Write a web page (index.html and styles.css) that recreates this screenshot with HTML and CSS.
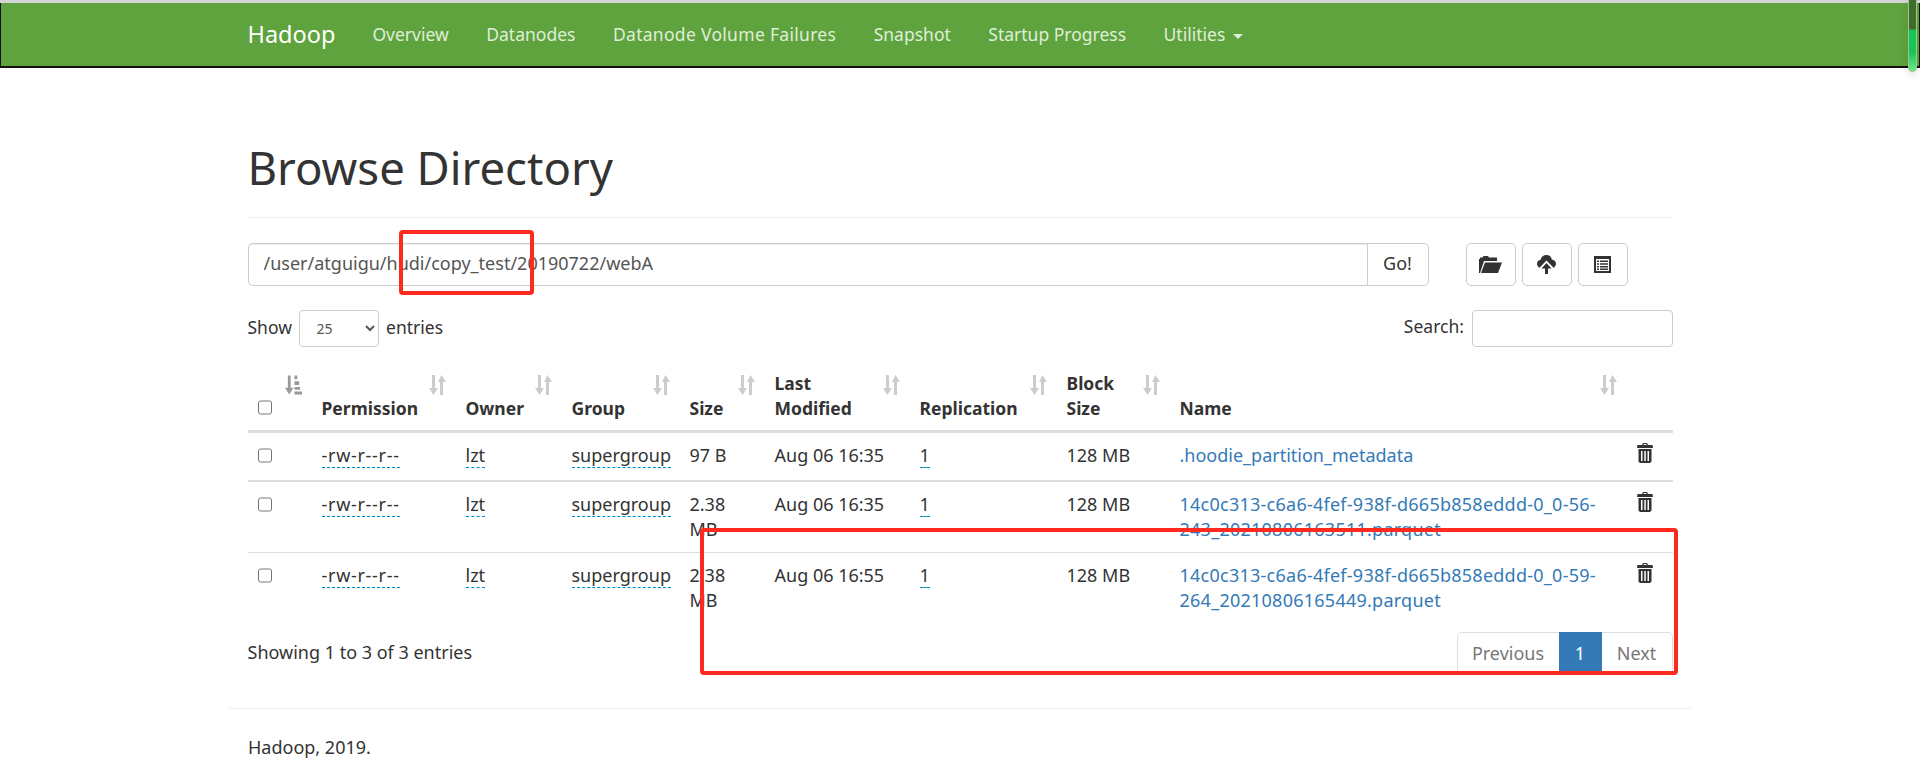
FILE: index.html
```html
<!DOCTYPE html>
<html lang="en">
  <head>
    <meta charset="UTF-8" />
    <meta name="viewport" content="width=device-width, initial-scale=1.0" />
    <title>Browsing HDFS</title>
    <link rel="stylesheet" href="styles.css">
  </head>
  <body>
    <svg class="defs" width="0" height="0">
      <symbol id="i-sort" viewBox="0 0 17 20">
        <path d="M3 0h3v13h3l-4.500 7L0 13h3zM11 7h3v13h-3zM12.500 0L17 7h-8z"/>
      </symbol>
      <symbol id="i-sort-active" viewBox="0 0 18 20">
        <path d="M3 0h3v13h3l-4.500 7L0 13h3z"/>
        <path d="M10 0h3v4h-3zM10 6h5v4h-5zM10 12h6v3h-6zM10 17h8v3h-8z"/>
      </symbol>
      <symbol id="i-trash" viewBox="0 0 16 20">
        <path d="M6 0h4l1 2h4.500l.5 3H0l.5-3H5zM6.800 1L6.400 2h3.200L9.200 1z"/>
        <path fill-rule="evenodd" d="M1.500 6h13v12.500L13 20H3l-1.500-1.500zM4 8v10h1.500V8zM7.300 8v10h1.500V8zM10.500 8v10H12V8z"/>
      </symbol>
    </svg>

    <div class="top-strip"></div>
    <nav class="navbar">
      <div class="container nav-inner">
        <a class="brand">Hadoop</a>
        <a class="nav-link">Overview</a>
        <a class="nav-link">Datanodes</a>
        <a class="nav-link nav-wide">Datanode Volume Failures</a>
        <a class="nav-link">Snapshot</a>
        <a class="nav-link">Startup Progress</a>
        <a class="nav-link">Utilities <span class="caret"></span></a>
      </div>
      <div class="scroll-pill"></div>
    </nav>

    <div class="container">
      <div class="page-header">
        <h1>Browse Directory</h1>
      </div>

      <div class="toolbar">
        <div class="path-group">
          <input class="path-input" type="text" value="/user/atguigu/hudi/copy_test/20190722/webA">
          <button class="btn btn-go">Go!</button>
        </div>
        <div class="tool-buttons">
          <button class="btn btn-icon">
            <svg class="ico ico-folder" viewBox="0 0 23 17"><path d="M1 3V1.500h2.500L4.500 0H9l1 1.500h8V5H5L1 17H0V3zM6 6.500h17L19 17H2z"/></svg>
          </button>
          <button class="btn btn-icon">
            <svg class="ico ico-cloud" viewBox="0 0 19 19"><path d="M9.500 0c3 0 5 2 5.300 4.500 2.500.3 4.200 2.200 4.200 4.300 0 1.800-1 3.200-2.400 3.900L9.500 5.500 2.500 12.700C1 12 0 10.500 0 8.800 0 6.800 1.500 5 3.500 4.800 4.200 2 6.500 0 9.500 0z"/><path d="M9.500 8l5 5.500h-3.500V19H8v-5.500H4.500z"/></svg>
          </button>
          <button class="btn btn-icon">
            <svg class="ico ico-list" viewBox="0 0 17 17"><path fill-rule="evenodd" d="M0 0h17v17H0zM2 3v12h13V3zM3 4.500h2v1.500H3zM6 4.500h8v1.500H6zM3 7.200h2v1.500H3zM6 7.200h8v1.500H6zM3 9.900h2v1.500H3zM6 9.900h8v1.500H6zM3 12.500h2V14H3zM6 12.500h8V14H6z"/></svg>
          </button>
        </div>
      </div>

      <div class="table-controls">
        <label class="length">Show
          <select class="length-select"><option>25</option></select>
          entries</label>
        <label class="search">Search: <input class="search-input" type="text"></label>
      </div>

      <table class="files">
        <colgroup>
          <col class="c-check"><col class="c-perm"><col class="c-owner"><col class="c-group"><col class="c-size">
          <col class="c-date"><col class="c-repl"><col class="c-block"><col class="c-name"><col class="c-del">
        </colgroup>
        <thead>
          <tr>
            <th><input type="checkbox"><svg class="sort sort-on"><use href="#i-sort-active"/></svg></th>
            <th>Permission<svg class="sort"><use href="#i-sort"/></svg></th>
            <th>Owner<svg class="sort"><use href="#i-sort"/></svg></th>
            <th>Group<svg class="sort"><use href="#i-sort"/></svg></th>
            <th>Size<svg class="sort"><use href="#i-sort"/></svg></th>
            <th>Last Modified<svg class="sort"><use href="#i-sort"/></svg></th>
            <th>Replication<svg class="sort"><use href="#i-sort"/></svg></th>
            <th>Block Size<svg class="sort"><use href="#i-sort"/></svg></th>
            <th>Name<svg class="sort"><use href="#i-sort"/></svg></th>
            <th></th>
          </tr>
        </thead>
        <tbody>
          <tr class="row-first">
            <td><input type="checkbox"></td>
            <td><span class="editable perm">-rw-r--r--</span></td>
            <td><span class="editable">lzt</span></td>
            <td><span class="editable">supergroup</span></td>
            <td>97 B</td>
            <td>Aug 06 16:35</td>
            <td><span class="editable">1</span></td>
            <td>128 MB</td>
            <td><a class="file-link">.hoodie_partition_metadata</a></td>
            <td><svg class="trash"><use href="#i-trash"/></svg></td>
          </tr>
          <tr class="row-next">
            <td><input type="checkbox"></td>
            <td><span class="editable perm">-rw-r--r--</span></td>
            <td><span class="editable">lzt</span></td>
            <td><span class="editable">supergroup</span></td>
            <td>2.38 MB</td>
            <td>Aug 06 16:35</td>
            <td><span class="editable">1</span></td>
            <td>128 MB</td>
            <td><a class="file-link hash">14c0c313-c6a6-4fef-938f-d665b858eddd-0_0-56-243_20210806163511.parquet</a></td>
            <td><svg class="trash"><use href="#i-trash"/></svg></td>
          </tr>
          <tr class="row-next">
            <td><input type="checkbox"></td>
            <td><span class="editable perm">-rw-r--r--</span></td>
            <td><span class="editable">lzt</span></td>
            <td><span class="editable">supergroup</span></td>
            <td>2.38 MB</td>
            <td>Aug 06 16:55</td>
            <td><span class="editable">1</span></td>
            <td>128 MB</td>
            <td><a class="file-link hash">14c0c313-c6a6-4fef-938f-d665b858eddd-0_0-59-264_20210806165449.parquet</a></td>
            <td><svg class="trash"><use href="#i-trash"/></svg></td>
          </tr>
        </tbody>
      </table>

      <div class="table-footer">
        <div class="info">Showing 1 to 3 of 3 entries</div>
        <div class="pagination">
          <a class="page page-prev">Previous</a>
          <a class="page page-on">1</a>
          <a class="page page-next">Next</a>
        </div>
      </div>
    </div>

    <footer class="site-footer">
      <p>Hadoop, 2019.</p>
    </footer>

    <!-- red marks drawn on top of the screenshot -->
    <div class="mark mark-path"></div>
    <div class="mark mark-row"></div>
  </body>
</html>
```

FILE: styles.css
```css
* {
    box-sizing: border-box;
}
html, body {
    height: 100%;
}
body {
    position: relative;
    margin: 0;
    overflow: hidden;
    background: #fff;
    color: #333;
    font-family: "Noto Sans", "Liberation Sans", sans-serif;
    font-size: 18px;
    line-height: 25px;
}
.defs {
    position: absolute;
}
.container {
    width: 1455px;
    margin: 0 auto;
    padding: 0 15px;
}
.top-strip {
    height: 3px;
    background: #d4d4d4;
}

/* navbar */
.navbar {
    position: relative;
    height: 65px;
    background: #5fa33e;
    border-left: 1px solid #111;
    border-right: 1px solid #111;
    border-bottom: 2px solid #111;
}
.nav-inner {
    display: flex;
    align-items: center;
    height: 63px;
}
.brand {
    margin-right: 37px;
    color: #fff;
    font-size: 23.5px;
}
.nav-link {
    margin-right: 37.5px;
    color: #dfeed8;
    font-size: 17.5px;
}
.nav-wide {
    letter-spacing: 0.3px;
}
.caret {
    display: inline-block;
    margin-left: 3px;
    vertical-align: middle;
    border-top: 5px solid #dfeed8;
    border-left: 5px solid transparent;
    border-right: 5px solid transparent;
}
.scroll-pill {
    position: absolute;
    top: -3px;
    right: 2px;
    width: 9px;
    height: 72px;
    border: 1px solid #9cc68c;
    border-top: 0;
    border-radius: 0 0 5px 5px;
    background: linear-gradient(#3f6b2c 0, #3f6b2c 29px, #17c45a 30px, #17c45a 52px, #74ea8c 72px);
    box-shadow: 0 4px 8px rgba(0, 0, 0, 0.12);
}

/* heading */
.page-header {
    margin-top: 74px;
    padding-bottom: 25px;
    border-bottom: 1px solid #eee;
}
h1 {
    margin: 0;
    font-size: 45.5px;
    font-weight: 400;
    line-height: 50px;
}

/* path bar */
.toolbar {
    display: flex;
    margin-top: 25px;
}
.path-group {
    display: flex;
    width: 1181px;
    height: 43px;
    margin-right: 37px;
}
.path-input {
    flex: 1;
    padding: 0 15px 2px;
    border: 1px solid #ccc;
    border-right: 0;
    border-radius: 5px 0 0 5px;
    box-shadow: inset 0 1px 1px rgba(0, 0, 0, 0.08);
    color: #555;
    font: inherit;
}
.btn {
    background: #fff;
    border: 1px solid #ccc;
    border-radius: 5px;
    color: #333;
    font: inherit;
}
.btn-go {
    width: 62px;
    padding: 0 0 3px;
    border-radius: 0 5px 5px 0;
}
.tool-buttons {
    display: flex;
    column-gap: 6px;
}
.btn-icon {
    display: flex;
    align-items: center;
    justify-content: center;
    width: 50px;
    height: 43px;
    padding: 0;
}
.ico {
    fill: #333;
}
.ico-folder {
    width: 23px;
    height: 17px;
}
.ico-cloud {
    width: 19px;
    height: 19px;
}
.ico-list {
    width: 17px;
    height: 17px;
}

/* show / search */
.table-controls {
    display: flex;
    justify-content: space-between;
    align-items: center;
    height: 37px;
    margin-top: 25px;
}
.length, .search {
    margin-top: -2px;
    font-size: 17.5px;
}
.length-select {
    width: 80px;
    height: 37px;
    margin: 0 2px 0 3px;
    padding: 0 0 0 12px;
    background: #fff;
    border: 1px solid #ccc;
    border-radius: 4px;
    color: #555;
    font-family: inherit;
    font-size: 14px;
}
.search-input {
    width: 201px;
    height: 37px;
    margin-left: 3px;
    border: 1px solid #ccc;
    border-radius: 4px;
    vertical-align: middle;
}

/* table */
.files {
    width: 1425px;
    margin-top: 13px;
    table-layout: fixed;
    border-collapse: collapse;
}
.c-check { width: 64px; }
.c-perm { width: 144px; }
.c-owner { width: 106px; }
.c-group { width: 118px; }
.c-size { width: 85px; }
.c-date { width: 145px; }
.c-repl { width: 147px; }
.c-block { width: 113px; }
.c-name { width: 457px; }
.c-del { width: 46px; }
th, td {
    padding: 10px;
    text-align: left;
    vertical-align: top;
}
th {
    position: relative;
    height: 70px;
    padding-right: 30px;
    padding-bottom: 9px;
    vertical-align: bottom;
    border-bottom: 3px solid #ddd;
    font-size: 17.5px;
    font-weight: 700;
}
td {
    border-top: 1px solid #ddd;
}
input[type="checkbox"] {
    display: block;
    width: 14px;
    height: 15px;
    margin: 5px 0 0;
}
th input[type="checkbox"] {
    margin-bottom: 6px;
}
.sort {
    position: absolute;
    top: 14px;
    right: 10px;
    width: 17px;
    height: 20px;
    fill: #ccc;
}
.sort-on {
    fill: #999;
}
.row-first td {
    padding-bottom: 12px;
    border-top: 0;
    border-bottom: 2px solid #ddd;
}
.row-first + .row-next td {
    border-top: 0;
}
.editable {
    border-bottom: 1px dashed #08c;
}
.perm {
    letter-spacing: 0.7px;
}
.file-link {
    color: #337ab7;
}
.hash {
    letter-spacing: 0.25px;
}
.trash {
    display: block;
    width: 16px;
    height: 20px;
    fill: #333;
}

/* under the table */
.table-footer {
    display: flex;
    justify-content: space-between;
    margin-top: 9px;
}
.info {
    padding-top: 8px;
}
.pagination {
    display: flex;
    height: 42px;
    border: 1px solid #ddd;
    border-radius: 5px;
    color: #777;
    line-height: 41px;
}
.page {
    text-align: center;
}
.page-prev { width: 101px; }
.page-on {
    width: 43px;
    margin: -1px 0;
    background: #337ab7;
    color: #fff;
    line-height: 43px;
}
.page-next { width: 70px; }

/* footer */
.site-footer {
    width: 1462px;
    margin: 34px auto 0;
    padding: 26px 19px 0;
    border-top: 1px solid #eee;
}
.site-footer p {
    margin: 0;
}

/* annotation rectangles over the page */
.mark {
    position: absolute;
    border: 4px solid #ff2a1f;
    border-radius: 4px;
}
.mark-path {
    top: 230px;
    left: 399px;
    width: 135px;
    height: 65px;
}
.mark-row {
    top: 528px;
    left: 700px;
    width: 978px;
    height: 147px;
}
```
